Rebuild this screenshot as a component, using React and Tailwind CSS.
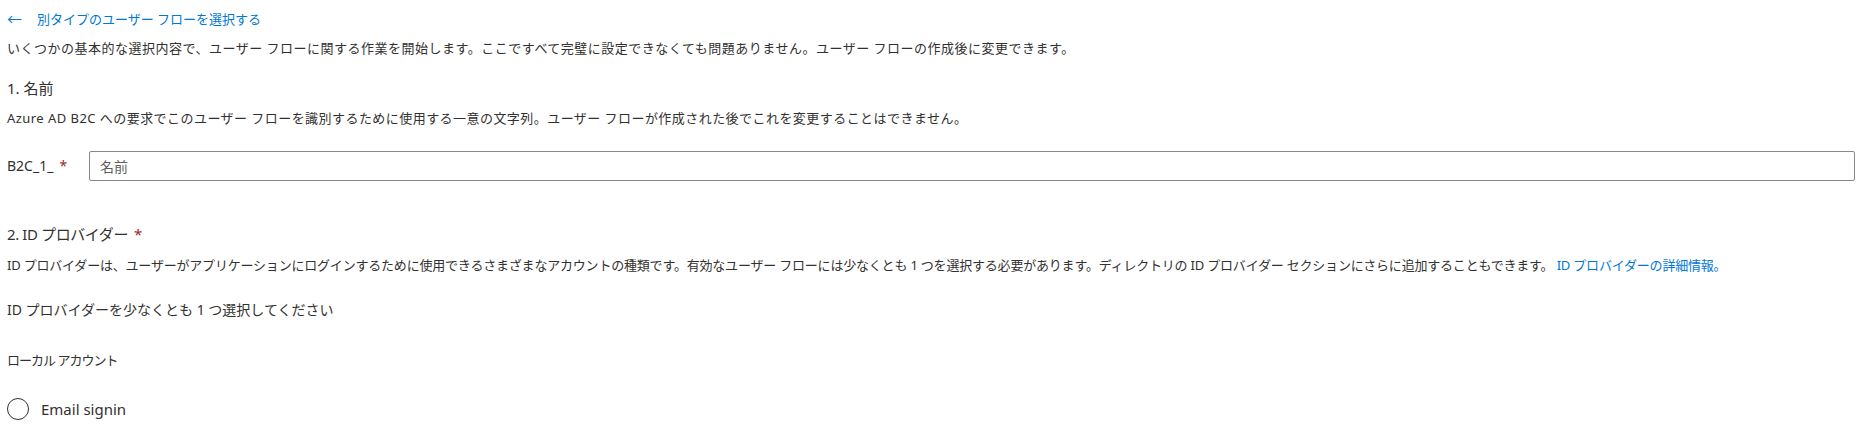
import React from 'react';

const font = { fontFamily: '"Segoe UI", "Noto Sans", "Noto Sans CJK JP", sans-serif' };

const Required = () => <span className="ml-[6px] text-[#a4262c]">*</span>;

const App = () => {
  return (
    <div
      className="min-h-[434px] w-[1869px] bg-white px-[7px] pt-[9px] text-[13px] leading-[20px] text-[#323130]"
      style={font}
    >
      <a href="#" className="flex items-center text-[#0078d4]">
        <span className="w-[30px] text-[15px]">←</span>
        <span>別タイプのユーザー フローを選択する</span>
      </a>
      <p className="mt-[9px] tracking-[0.5px]">
        いくつかの基本的な選択内容で、ユーザー フローに関する作業を開始します。ここですべて完璧に設定できなくても問題ありません。ユーザー フローの作成後に変更できます。
      </p>

      <h2 className="mt-[20px] text-[15px]">1. 名前</h2>
      <p className="mt-[10px] tracking-[0.45px]">
        Azure AD B2C への要求でこのユーザー フローを識別するために使用する一意の文字列。ユーザー フローが作成された後でこれを変更することはできません。
      </p>

      <div className="mt-[23px] flex items-center pr-[7px]">
        <label className="w-[82px] shrink-0 text-[14px]">
          B2C_1_
          <Required />
        </label>
        <input
          type="text"
          placeholder="名前"
          className="h-[30px] flex-1 rounded-[2px] border border-[#8a8886] px-[10px] text-[14px] placeholder:text-[#605e5c] outline-none"
          style={font}
        />
      </div>

      <h2 className="mt-[43px] text-[15px] tracking-[-0.4px]">
        2. ID プロバイダー
        <Required />
      </h2>
      <p className="mt-[11px] tracking-[-0.2px]">
        ID プロバイダーは、ユーザーがアプリケーションにログインするために使用できるさまざまなアカウントの種類です。有効なユーザー フローには少なくとも 1 つを選択する必要があります。ディレクトリの ID プロバイダー セクションにさらに追加することもできます。{' '}
        <a href="#" className="text-[#0078d4]">
          ID プロバイダーの詳細情報。
        </a>
      </p>

      <p className="mt-[25px] text-[14px]">ID プロバイダーを少なくとも 1 つ選択してください</p>

      <p className="mt-[30px] tracking-[-1px]">ローカル アカウント</p>

      <label className="mt-[28px] flex items-center">
        <span className="h-[22px] w-[22px] rounded-full border border-[#323130]" />
        <span className="ml-[12px] text-[15px]">Email signin</span>
      </label>
    </div>
  );
};

export default App;
